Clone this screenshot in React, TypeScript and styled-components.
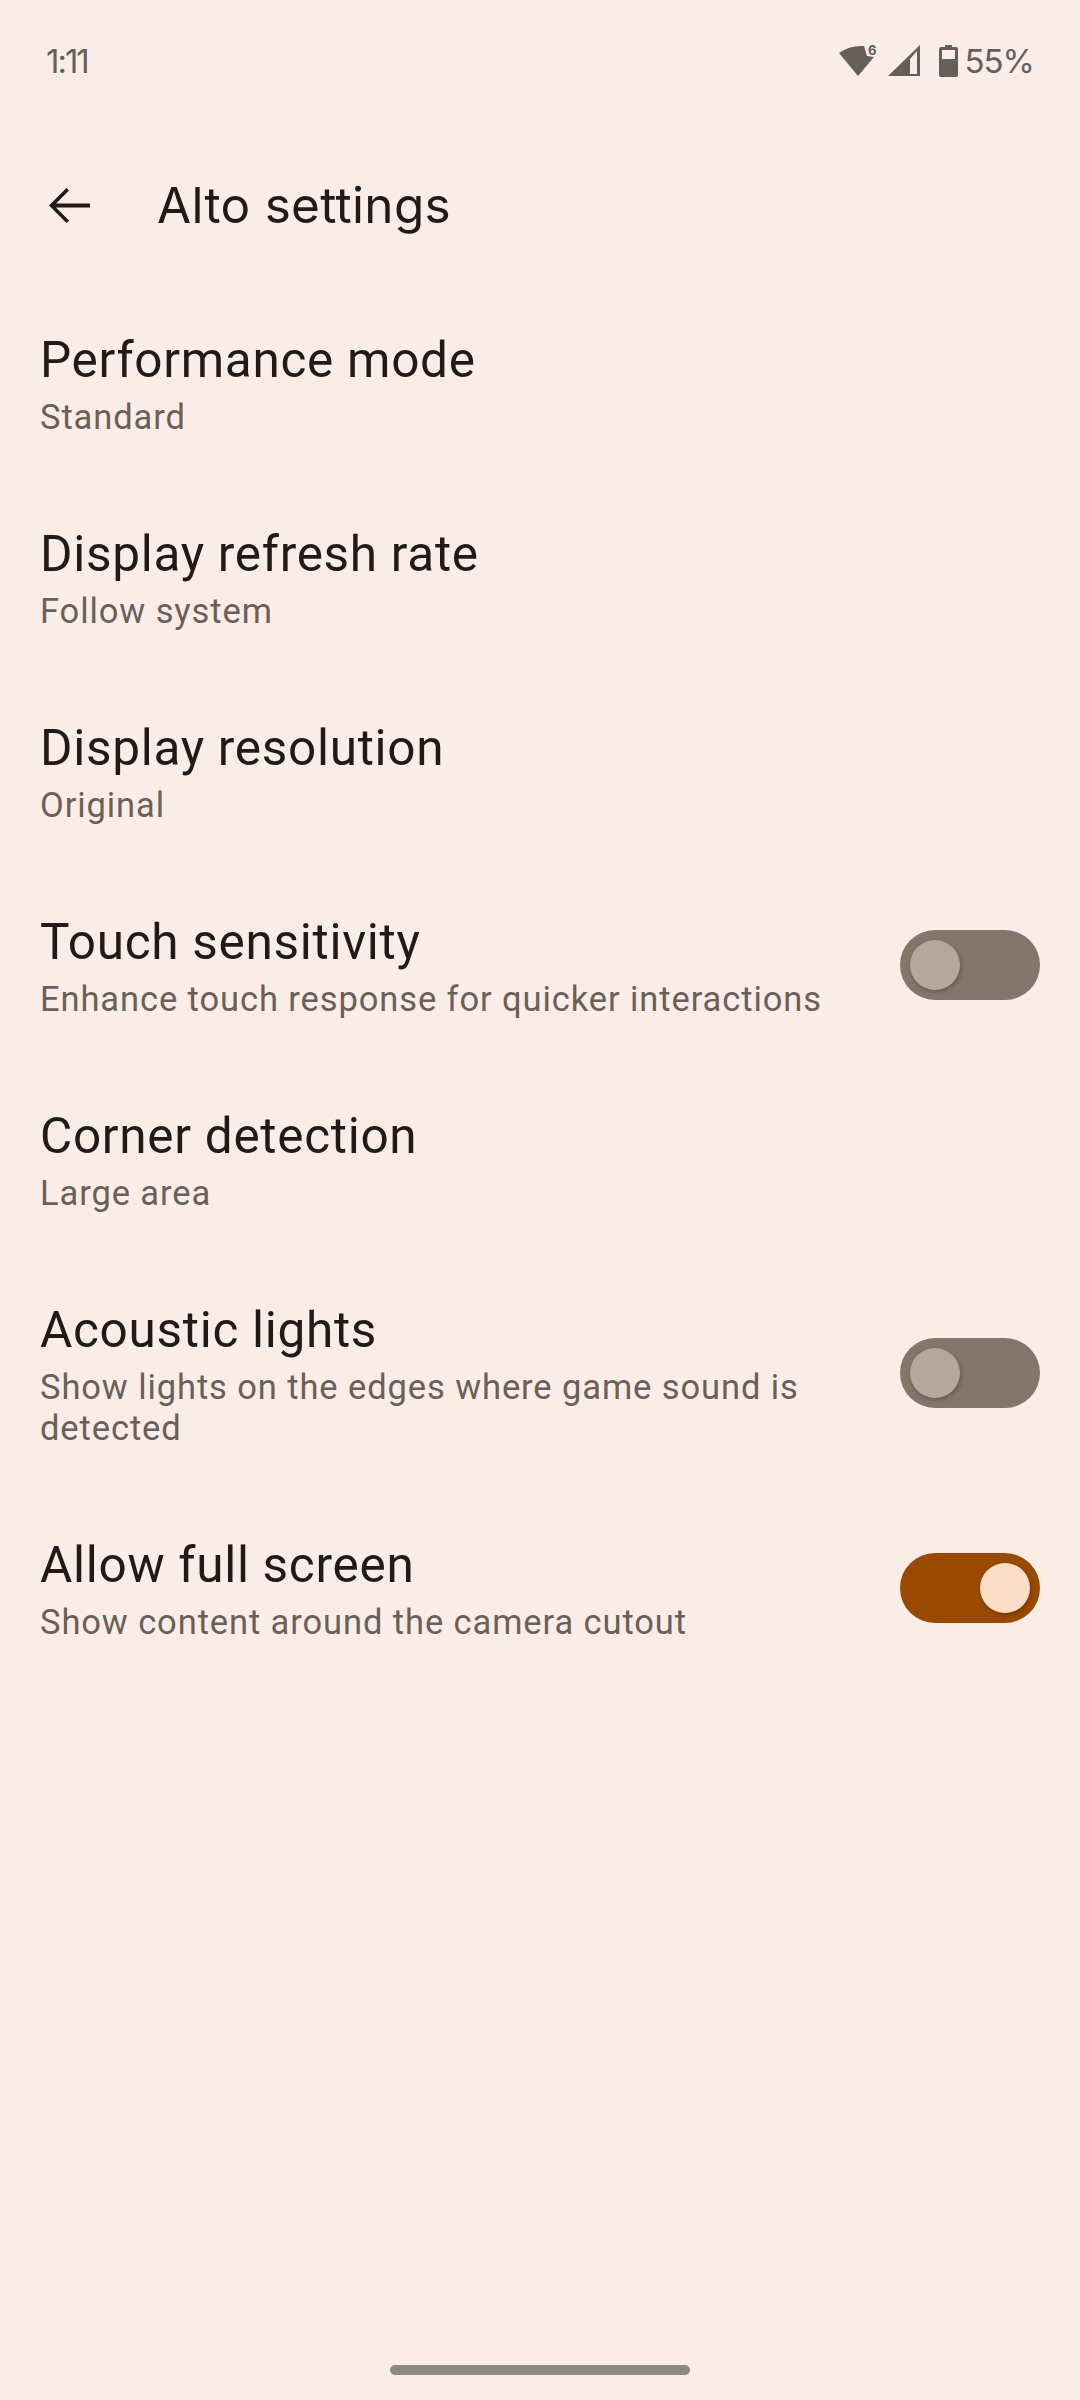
import React from "react";
import styled, { createGlobalStyle } from "styled-components";

const GlobalStyle = createGlobalStyle`
  html, body {
    margin: 0;
    padding: 0;
    background: #faede7;
  }
`;

const Screen = styled.div`
  width: 1080px;
  height: 2400px;
  background: #faede7;
  display: flex;
  flex-direction: column;
  overflow: hidden;
`;

const StatusBar = styled.div`
  height: 122px;
  padding: 0 46px;
  box-sizing: border-box;
  display: flex;
  justify-content: space-between;
  align-items: center;
  font-family: "Inter", sans-serif;
  font-size: 33px;
  color: #655f5b;
`;

const Time = styled.span`
  letter-spacing: -2px;
`;

const StatusIcons = styled.div`
  display: flex;
  align-items: center;
`;

const WifiWrap = styled.div`
  position: relative;
  width: 36px;
  height: 32px;
  margin-right: 13px;
`;

const WifiBadge = styled.span`
  position: absolute;
  top: -1px;
  right: -1px;
  font-size: 13px;
  font-weight: 700;
  line-height: 13px;
`;

const Percent = styled.span`
  margin-left: 6px;
  letter-spacing: -1px;
`;

const Header = styled.div`
  height: 162px;
  box-sizing: border-box;
  padding: 4px 0 0 46px;
  display: flex;
  align-items: center;
`;

const BackIcon = styled.svg`
  width: 48px;
  height: 48px;
  margin-right: 63px;
`;

const Title = styled.h1`
  margin: 0;
  font-family: "Inter", sans-serif;
  font-size: 49.5px;
  font-weight: 400;
  letter-spacing: 0.3px;
  color: #211a16;
`;

const List = styled.div`
  display: flex;
  flex-direction: column;
`;

const Row = styled.div`
  display: flex;
  align-items: center;
  justify-content: space-between;
  padding: 44px 40px 40px;
`;

const RowText = styled.div`
  width: 800px;
  font-family: "Roboto", sans-serif;
`;

const RowTitle = styled.div`
  font-size: 49.5px;
  line-height: 64px;
  letter-spacing: 0.7px;
  color: #211a16;
`;

const RowSummary = styled.div`
  margin-top: 5px;
  font-size: 34.5px;
  line-height: 41px;
  letter-spacing: 0.9px;
  color: #6b5f58;
`;

const Track = styled.div<{ $on?: boolean }>`
  width: 140px;
  height: 70px;
  border-radius: 35px;
  padding: 10px;
  margin-top: -1px;
  box-sizing: border-box;
  display: flex;
  justify-content: ${(p) => (p.$on ? "flex-end" : "flex-start")};
  background: ${(p) => (p.$on ? "#994a00" : "#85756a")};
`;

const Thumb = styled.div<{ $on?: boolean }>`
  width: 50px;
  height: 50px;
  border-radius: 50%;
  background: ${(p) => (p.$on ? "#fbdcc6" : "#b8a69c")};
  box-shadow: 1px 2px 4px rgba(0, 0, 0, 0.25);
`;

const Spacer = styled.div`
  flex: 1;
`;

const GestureBar = styled.div`
  align-self: center;
  width: 300px;
  height: 10px;
  border-radius: 5px;
  background: #8f8782;
  margin-bottom: 25px;
`;

type Item = { title: string; summary: string; toggle?: "on" | "off" };

const items: Item[] = [
  { title: "Performance mode", summary: "Standard" },
  { title: "Display refresh rate", summary: "Follow system" },
  { title: "Display resolution", summary: "Original" },
  { title: "Touch sensitivity", summary: "Enhance touch response for quicker interactions", toggle: "off" },
  { title: "Corner detection", summary: "Large area" },
  { title: "Acoustic lights", summary: "Show lights on the edges where game sound is detected", toggle: "off" },
  { title: "Allow full screen", summary: "Show content around the camera cutout", toggle: "on" },
];

export default function App() {
  return (
    <Screen>
      <GlobalStyle />
      <StatusBar>
        <Time>1:11</Time>
        <StatusIcons>
          <WifiWrap>
            <svg width="36" height="32" viewBox="0 0 36 32">
              <path d="M19 31 L0 8 Q11 0 25 1 L28 11 L35 12 Z" fill="#655f5b" />
            </svg>
            <WifiBadge>6</WifiBadge>
          </WifiWrap>
          <svg width="32" height="32" viewBox="0 0 32 32" style={{ marginRight: 19 }}>
            <path fillRule="evenodd" d="M0 31 L32 0 V31 Z M22 14 V29 H29 V6 Z" fill="#655f5b" />
          </svg>
          <svg width="19" height="32" viewBox="0 0 19 32">
            <path fillRule="evenodd" d="M6 0 H13 V2 H17 Q19 2 19 4 V30 Q19 32 17 32 H2 Q0 32 0 30 V4 Q0 2 2 2 H6 Z M3 5 V14 H16 V5 Z" fill="#655f5b" />
          </svg>
          <Percent>55%</Percent>
        </StatusIcons>
      </StatusBar>
      <Header>
        <BackIcon viewBox="0 0 48 48">
          <path d="M44 26.5 H10 L23 39.5 L20.5 42 L3 24.5 L20.5 7 L23 9.5 L10 22.5 H44 Z" fill="#211a16" />
        </BackIcon>
        <Title>Alto settings</Title>
      </Header>
      <List>
        {items.map((item) => (
          <Row key={item.title}>
            <RowText>
              <RowTitle>{item.title}</RowTitle>
              <RowSummary>{item.summary}</RowSummary>
            </RowText>
            {item.toggle && (
              <Track $on={item.toggle === "on"}>
                <Thumb $on={item.toggle === "on"} />
              </Track>
            )}
          </Row>
        ))}
      </List>
      <Spacer />
      <GestureBar />
    </Screen>
  );
}
